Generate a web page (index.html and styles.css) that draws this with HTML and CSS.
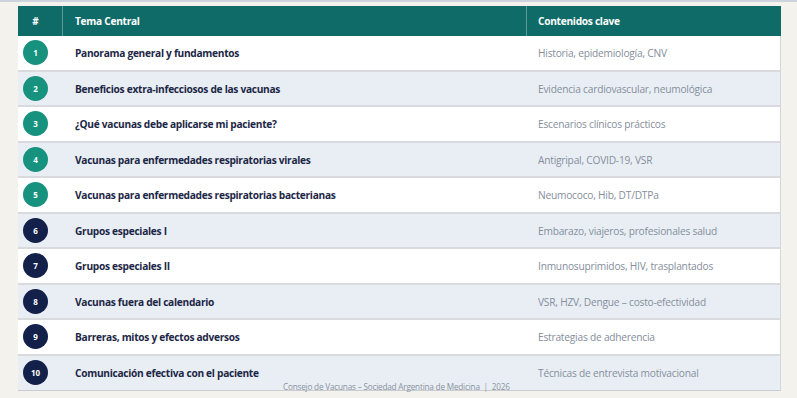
FILE: index.html
```html
<!DOCTYPE html>
<html lang="es">
<head>
<meta charset="utf-8">
<link rel="stylesheet" href="styles.css">
</head>
<body>
<div class="topline"></div>
<div class="table">
  <div class="row head">
    <div class="c-num">#</div>
    <div class="c-topic">Tema Central</div>
    <div class="c-keys">Contenidos clave</div>
  </div>
  <div class="row"><div class="c-num"><span class="badge teal">1</span></div><div class="c-topic">Panorama general y fundamentos</div><div class="c-keys">Historia, epidemiología, CNV</div></div>
  <div class="row alt"><div class="c-num"><span class="badge teal">2</span></div><div class="c-topic">Beneficios extra-infecciosos de las vacunas</div><div class="c-keys">Evidencia cardiovascular, neumológica</div></div>
  <div class="row"><div class="c-num"><span class="badge teal">3</span></div><div class="c-topic">¿Qué vacunas debe aplicarse mi paciente?</div><div class="c-keys">Escenarios clínicos prácticos</div></div>
  <div class="row alt"><div class="c-num"><span class="badge teal">4</span></div><div class="c-topic">Vacunas para enfermedades respiratorias virales</div><div class="c-keys">Antigripal, COVID-19, VSR</div></div>
  <div class="row"><div class="c-num"><span class="badge teal">5</span></div><div class="c-topic">Vacunas para enfermedades respiratorias bacterianas</div><div class="c-keys">Neumococo, Hib, DT/DTPa</div></div>
  <div class="row alt"><div class="c-num"><span class="badge navy">6</span></div><div class="c-topic">Grupos especiales I</div><div class="c-keys">Embarazo, viajeros, profesionales salud</div></div>
  <div class="row"><div class="c-num"><span class="badge navy">7</span></div><div class="c-topic">Grupos especiales II</div><div class="c-keys">Inmunosuprimidos, HIV, trasplantados</div></div>
  <div class="row alt"><div class="c-num"><span class="badge navy">8</span></div><div class="c-topic">Vacunas fuera del calendario</div><div class="c-keys">VSR, HZV, Dengue – costo-efectividad</div></div>
  <div class="row"><div class="c-num"><span class="badge navy">9</span></div><div class="c-topic">Barreras, mitos y efectos adversos</div><div class="c-keys">Estrategias de adherencia</div></div>
  <div class="row alt last"><div class="c-num"><span class="badge navy">10</span></div><div class="c-topic">Comunicación efectiva con el paciente</div><div class="c-keys">Técnicas de entrevista motivacional</div>
    <div class="footer">Consejo de Vacunas – Sociedad Argentina de Medicina &nbsp;|&nbsp; 2026</div>
  </div>
</div>
</body>
</html>
```

FILE: styles.css
```css
html, body {
  margin: 0;
  padding: 0;
}
body {
  width: 797px;
  height: 398px;
  background: #f4f2ec;
  font-family: "Open Sans", "Noto Sans", sans-serif;
  overflow: hidden;
}
.topline {
  height: 2px;
  background: #cdd3dc;
}
.table {
  margin: 4px 0 0 18px;
  width: 763px;
}
.row {
  display: grid;
  grid-template-columns: 45px 464px 254px;
  height: 35.5px;
  box-sizing: border-box;
  align-items: center;
  background: #ffffff;
  border-bottom: 2px solid #d8dadd;
  border-right: 1px solid #d3d6da;
  position: relative;
}
.row.alt {
  background: #e9eef4;
}
.row.last {
  border-bottom: 1px solid #c9ccd0;
}
.row.head {
  height: 30px;
  background: #0e6b68;
  border: none;
  color: #ffffff;
  font-weight: 700;
}
.row.head > div {
  height: 100%;
  display: flex;
  align-items: center;
  padding-top: 0;
}
.row.head .c-num {
  justify-content: center;
  border-right: 1px solid #5f9a98;
  box-sizing: border-box;
  padding-right: 9px;
  font-size: 10px;
}
.row.head .c-topic {
  border-right: 1px solid #5f9a98;
  box-sizing: border-box;
}
.c-num {
  display: flex;
  justify-content: center;
  align-items: center;
  padding-right: 10px;
}
.c-topic {
  padding-left: 12px;
  padding-top: 1px;
  font-size: 10.2px;
  font-weight: 700;
  color: #1c2746;
  letter-spacing: -0.3px;
}
.row.head .c-topic, .row.head .c-keys {
  color: #fff;
}
.c-keys {
  padding-left: 11px;
  padding-top: 1px;
  font-size: 10.2px;
  color: #858e9c;
  letter-spacing: -0.22px;
}
.row.head .c-keys {
  font-weight: 700;
  letter-spacing: -0.3px;
}
.badge {
  width: 25px;
  height: 25px;
  border-radius: 50%;
  display: flex;
  align-items: center;
  justify-content: center;
  color: #fff;
  font-size: 8px;
  font-weight: 700;
}
.badge.teal {
  background: #17927f;
}
.badge.navy {
  background: #12204a;
}
.footer {
  position: absolute;
  left: 265px;
  bottom: -2px;
  font-size: 8.2px;
  color: #8a929e;
  letter-spacing: -0.2px;
  white-space: pre;
}
```
